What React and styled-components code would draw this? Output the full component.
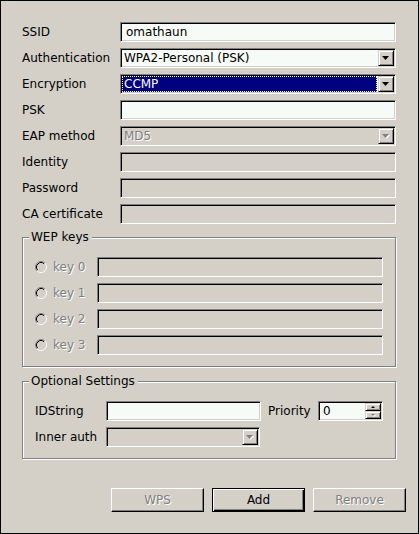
import React from 'react';
import styled, { createGlobalStyle, css } from 'styled-components';

const Global = createGlobalStyle`
  html, body { margin: 0; padding: 0; background: #d4d0c8; }
  body { font-family: "DejaVu Sans", "Liberation Sans", sans-serif; font-size: 12px; color: #000; }
  * { box-sizing: border-box; }
`;

const disabledText = css`
  color: #808080;
  text-shadow: 1px 1px 0 #fff;
`;

const Window = styled.div`
  width: 419px;
  height: 534px;
  border: 1px solid #000;
  background: #d4d0c8;
  display: flex;
  flex-direction: column;
  padding: 21px 12px 21px 21px;
`;

const Content = styled.div`
  padding-right: 10px;
  display: flex;
  flex-direction: column;
`;

const FormGrid = styled.div`
  display: grid;
  grid-template-columns: 98px 1fr;
  grid-auto-rows: 20px;
  row-gap: 6px;
  align-items: center;
`;

const Label = styled.div`
  white-space: nowrap;
  line-height: 14px;
  ${p => p.$disabled && disabledText}
`;

const sunken = css`
  height: 20px;
  border: 1px solid;
  border-color: #808080 #fff #fff #808080;
  box-shadow: inset 1px 1px 0 #000, inset -1px -1px 0 #d4d0c8;
`;

const LineEdit = styled.div`
  ${sunken}
  background: ${p => (p.$disabled ? '#d4d0c8' : '#f7fbf7')};
  padding: 0 5px;
  display: flex;
  align-items: center;
  white-space: nowrap;
  overflow: hidden;
  ${p => p.$width && `width: ${p.$width}px;`}
`;

const ComboFrame = styled.div`
  ${sunken}
  background: ${p => (p.$disabled ? '#d4d0c8' : '#f7fbf7')};
  padding: 1px;
  display: flex;
  align-items: stretch;
  ${p => p.$width && `width: ${p.$width}px;`}
`;

const ComboText = styled.div`
  flex: 1;
  display: flex;
  align-items: center;
  padding-left: 2px;
  white-space: nowrap;
  ${p => p.$disabled && disabledText}
  ${p =>
    p.$selected &&
    css`
      background: #000080;
      color: #fff;
      outline: 1px dotted #ffffaa;
      outline-offset: -1px;
      margin-right: 1px;
    `}
`;

const raisedSmall = css`
  border: 1px solid;
  border-color: #d4d0c8 #000 #000 #d4d0c8;
  box-shadow: inset 1px 1px 0 #fff, inset -1px -1px 0 #808080;
  background: #d4d0c8;
  display: flex;
  align-items: center;
  justify-content: center;
`;

const ArrowButton = styled.div`
  ${raisedSmall}
  width: 16px;
  flex: none;
`;

const Arrow = ({ disabled, up, w = 7, h = 4 }) => (
  <svg width={w + 1} height={h + 1} viewBox={`0 0 ${w + 1} ${h + 1}`} style={{ display: 'block' }}>
    {disabled && (
      <polygon
        points={up ? `1,${h + 1} ${w / 2 + 1},1 ${w + 1},${h + 1}` : `1,1 ${w + 1},1 ${w / 2 + 1},${h + 1}`}
        fill="#fff"
      />
    )}
    <polygon
      points={up ? `0,${h} ${w / 2},0 ${w},${h}` : `0,0 ${w},0 ${w / 2},${h}`}
      fill={disabled ? '#808080' : '#000'}
    />
  </svg>
);

const Combo = ({ value, disabled, selected, width }) => (
  <ComboFrame $disabled={disabled} $width={width}>
    <ComboText $disabled={disabled} $selected={selected}>{value}</ComboText>
    <ArrowButton>
      <Arrow disabled={disabled} />
    </ArrowButton>
  </ComboFrame>
);

const GroupBox = styled.div`
  position: relative;
  border: 1px solid #808080;
  box-shadow: inset 1px 1px 0 #fff, 1px 1px 0 #fff;
  margin-top: ${p => p.$mt}px;
  height: ${p => p.$h}px;
  padding: 19px 12px 0 12px;
`;

const GroupTitle = styled.div`
  position: absolute;
  top: -8px;
  left: 6px;
  padding: 0 3px 0 2px;
  background: #d4d0c8;
  line-height: 14px;
  white-space: nowrap;
`;

const KeyGrid = styled.div`
  display: grid;
  grid-template-columns: 62px 1fr;
  grid-auto-rows: 20px;
  row-gap: 6px;
  align-items: center;
`;

const RadioLabel = styled.div`
  display: flex;
  align-items: center;
  gap: 6px;
  ${disabledText}
`;

const Radio = () => (
  <svg width="12" height="12" viewBox="0 0 12 12" style={{ display: 'block', flex: 'none' }}>
    <circle cx="6" cy="6" r="4" fill="#d4d0c8" />
    <path d="M2.11 9.89 A5.5 5.5 0 0 1 9.89 2.11" stroke="#808080" fill="none" />
    <path d="M9.89 2.11 A5.5 5.5 0 0 1 2.11 9.89" stroke="#fff" fill="none" />
    <path d="M2.82 9.18 A4.5 4.5 0 0 1 9.18 2.82" stroke="#000" fill="none" />
    <path d="M9.18 2.82 A4.5 4.5 0 0 1 2.82 9.18" stroke="#d4d0c8" fill="none" />
  </svg>
);

const OptRow = styled.div`
  display: flex;
  align-items: center;
  height: 20px;
  & + & { margin-top: 6px; }
`;

const OptLabel = styled.div`
  width: ${p => p.$w}px;
  margin-left: ${p => p.$ml || 0}px;
  white-space: nowrap;
  line-height: 14px;
`;

const SpinFrame = styled.div`
  ${sunken}
  width: 65px;
  background: #f7fbf7;
  padding: 1px;
  display: flex;
`;

const SpinText = styled.div`
  flex: 1;
  display: flex;
  align-items: center;
  padding-left: 3px;
`;

const SpinButtons = styled.div`
  width: 16px;
  display: flex;
  flex-direction: column;
`;

const SpinButton = styled.div`
  ${raisedSmall}
  flex: 1;
`;

const ButtonRow = styled.div`
  margin-top: auto;
  display: flex;
  justify-content: flex-end;
  gap: 8px;
`;

const PushButton = styled.div`
  width: 93px;
  height: 24px;
  display: flex;
  align-items: center;
  justify-content: center;
  background: #d4d0c8;
  border: 1px solid;
  ${p =>
    p.$default
      ? css`
          border-color: #000;
          box-shadow: inset 1px 1px 0 #fff, inset -1px -1px 0 #000, inset -2px -2px 0 #808080;
        `
      : css`
          border-color: #fff #000 #000 #fff;
          box-shadow: inset -1px -1px 0 #808080;
        `}
  ${p => p.$disabled && disabledText}
`;

export default function App() {
  return (
    <>
      <Global />
      <Window>
        <Content>
          <FormGrid>
            <Label>SSID</Label>
            <LineEdit>omathaun</LineEdit>
            <Label>Authentication</Label>
            <Combo value="WPA2-Personal (PSK)" />
            <Label>Encryption</Label>
            <Combo value="CCMP" selected />
            <Label>PSK</Label>
            <LineEdit />
            <Label>EAP method</Label>
            <Combo value="MD5" disabled />
            <Label>Identity</Label>
            <LineEdit $disabled />
            <Label>Password</Label>
            <LineEdit $disabled />
            <Label>CA certificate</Label>
            <LineEdit $disabled />
          </FormGrid>

          <GroupBox $mt={13} $h={130}>
            <GroupTitle>WEP keys</GroupTitle>
            <KeyGrid>
              {[0, 1, 2, 3].map(i => (
                <React.Fragment key={i}>
                  <RadioLabel>
                    <Radio />
                    <span>key {i}</span>
                  </RadioLabel>
                  <LineEdit $disabled />
                </React.Fragment>
              ))}
            </KeyGrid>
          </GroupBox>

          <GroupBox $mt={14} $h={78}>
            <GroupTitle>Optional Settings</GroupTitle>
            <OptRow>
              <OptLabel $w={71}>IDString</OptLabel>
              <LineEdit $width={155} />
              <OptLabel $w={50} $ml={7}>Priority</OptLabel>
              <SpinFrame>
                <SpinText>0</SpinText>
                <SpinButtons>
                  <SpinButton><Arrow up w={4} h={2} /></SpinButton>
                  <SpinButton><Arrow disabled w={4} h={2} /></SpinButton>
                </SpinButtons>
              </SpinFrame>
            </OptRow>
            <OptRow>
              <OptLabel $w={71}>Inner auth</OptLabel>
              <Combo value="" disabled width={154} />
            </OptRow>
          </GroupBox>
        </Content>

        <ButtonRow>
          <PushButton $disabled>WPS</PushButton>
          <PushButton $default>Add</PushButton>
          <PushButton $disabled>Remove</PushButton>
        </ButtonRow>
      </Window>
    </>
  );
}
